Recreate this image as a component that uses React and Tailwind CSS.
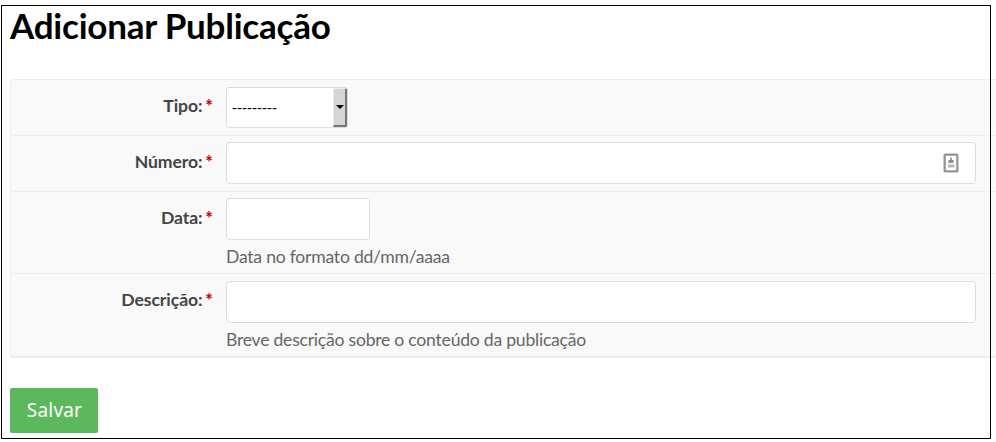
const FieldRow = ({ label, className, fieldClassName, help, children }) => {
  return (
    <div className={`flex box-border ${className}`}>
      <div className="w-[202px] shrink-0 pt-[14px] text-right text-[17.6px] leading-[24px] font-bold tracking-[-0.08px] text-[#444]">
        {label}:<span className="ml-[2.5px] align-[-1px] text-[19px] leading-[20px] text-[#cc0000]">*</span>
      </div>
      <div className={`ml-[13px] ${fieldClassName}`}>
        {children}
        {help && <p className="mt-[5px] text-[17.6px] leading-[24px] tracking-[-0.24px] whitespace-nowrap text-[#666]">{help}</p>}
      </div>
    </div>
  );
};

const AutofillIcon = () => {
  return (
    <svg width="16" height="20" viewBox="0 0 16 20" fill="none">
      <rect x="0.5" y="0.5" width="15" height="19" rx="1.5" stroke="#dedede" />
      <rect x="1.75" y="1.75" width="12.5" height="16.5" rx="0.5" stroke="#929292" strokeWidth="2" />
      <path d="M7.200 4.500h1.600v2.500h1.700v3h-5v-3h1.700z" fill="#8c8c8c" />
      <path d="M5 11.500h6.500v3H5z" fill="#b5b5b5" />
    </svg>
  );
};

const App = () => {
  return (
    <div className="relative h-[442px] w-[996px] overflow-hidden bg-white pl-[10px] font-['Lato',sans-serif]">
      <h1 className="pt-[2px] text-[35px] leading-[46px] font-bold tracking-[-0.22px] text-black">Adicionar Publicação</h1>

      <form>
        <div className="mt-[31px] w-[1000px] rounded-[3px] border border-b-2 border-[#ededed] bg-[#f9f9f9]">
          <FieldRow label="Tipo" className="h-[56px] border-b border-[#ededed]" fieldClassName="pt-[7px]">
            <div className="flex h-[41px] w-[122px] items-stretch justify-between overflow-hidden rounded-[3px] border border-[#ddd] bg-white">
              <span className="pl-[5px] font-['Liberation_Sans',sans-serif] text-[15px] leading-[39px] text-black">---------</span>
              <span className="flex w-[14px] items-center justify-center border-t border-r-2 border-b-2 border-l border-t-[#eee] border-r-[#777] border-b-[#777] border-l-[#eee] bg-[#d5d5d5]">
                <svg width="8" height="4" viewBox="0 0 8 4">
                  <path d="M0 0h8L4 4z" fill="#000" />
                </svg>
              </span>
            </div>
          </FieldRow>
          <FieldRow label="Número" className="h-[56px] border-b border-[#ededed]" fieldClassName="pt-[6px]">
            <div className="flex h-[42px] w-[750px] items-center justify-end rounded-[4px] border border-[#ddd] bg-white pr-[16px]">
              <AutofillIcon />
            </div>
          </FieldRow>
          <FieldRow label="Data" className="h-[82px] border-b border-[#ededed]" fieldClassName="pt-[6px]" help="Data no formato dd/mm/aaaa">
            <div className="h-[42px] w-[144px] rounded-[4px] border border-[#ddd] bg-white" />
          </FieldRow>
          <FieldRow label="Descrição" className="h-[82px]" fieldClassName="pt-[7px]" help="Breve descrição sobre o conteúdo da publicação">
            <div className="h-[42px] w-[750px] rounded-[4px] border border-[#ddd] bg-white" />
          </FieldRow>
        </div>

        <button
          type="button"
          className="mt-[30px] h-[45px] w-[88px] rounded-[2px] bg-[#5cb85c] pl-[1px] font-['Noto_Sans',sans-serif] text-[19px] leading-[45px] tracking-[0.2px] text-white"
        >
          Salvar
        </button>
      </form>

      {/* Outline drawn over the page */}
      <div className="pointer-events-none absolute top-[5px] left-[1px] h-[434px] w-[990px] border border-black" />
    </div>
  );
};

export default App;
